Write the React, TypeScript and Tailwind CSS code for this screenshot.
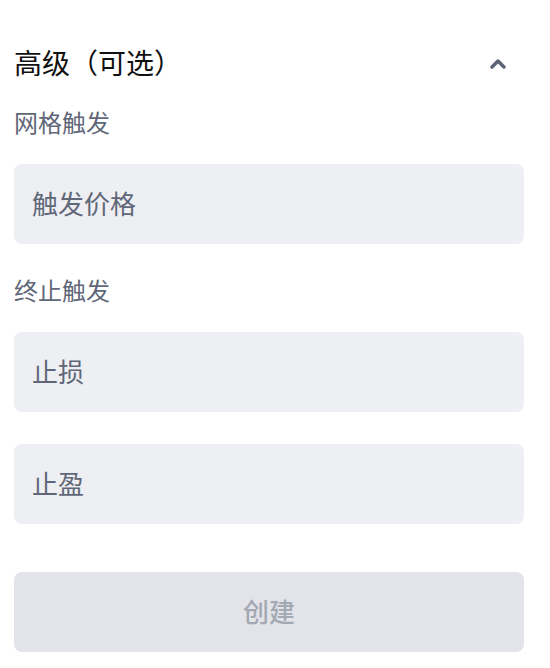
import { ChevronUp } from "lucide-react";

const Field = ({ placeholder }: { placeholder: string }) => (
  <input
    placeholder={placeholder}
    className="h-20 w-full rounded-lg bg-[#eeeff3] px-[18px] pb-[3px] text-[26px] text-[#111] outline-none placeholder:text-[#5f6778]"
  />
);

export default function App() {
  return (
    <div
      className="flex w-[550px] flex-col bg-white pl-[14px] pr-[26px] pt-[44px]"
      style={{ fontFamily: '"Noto Sans CJK SC", "Noto Sans", sans-serif' }}
    >
      <div className="flex h-9 items-center justify-between">
        <span className="text-[28px] leading-9 text-[#111]">高级（可选）</span>
        <ChevronUp className="mr-[14px] mt-1 h-6 w-6 text-[#5b6477]" strokeWidth={3.5} />
      </div>

      <div className="mt-[26px] text-[24px] leading-8 text-[#5f6778]">网格触发</div>
      <div className="mt-[26px]">
        <Field placeholder="触发价格" />
      </div>

      <div className="mt-[30px] text-[24px] leading-8 text-[#5f6778]">终止触发</div>
      <div className="mt-[26px] flex flex-col gap-8">
        <Field placeholder="止损" />
        <Field placeholder="止盈" />
      </div>

      <button className="mt-12 h-20 w-full rounded-lg bg-[#e2e4e9] pb-[3px] text-[26px] font-medium text-[#a3a8b3]">
        创建
      </button>
    </div>
  );
}
